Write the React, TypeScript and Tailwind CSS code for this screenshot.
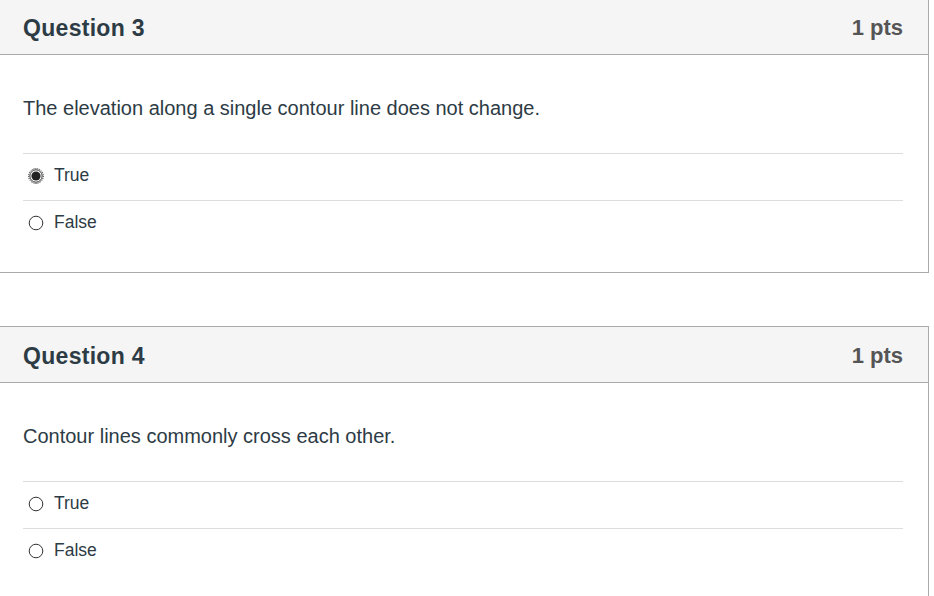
import React from "react";

type Opt = { label: string; checked?: boolean };

function Radio({ checked }: { checked?: boolean }) {
  return (
    <svg width="16" height="16" viewBox="0 0 16 16" className="shrink-0">
      {checked ? (
        <>
          <circle cx="8" cy="8" r="7.4" fill="none" stroke="#222" strokeWidth="1" strokeDasharray="1 1" />
          <circle cx="8" cy="8" r="6.2" fill="#fff" stroke="#333" strokeWidth="1" />
          <circle cx="8" cy="8" r="4.6" fill="#222" />
        </>
      ) : (
        <circle cx="8" cy="8" r="6.8" fill="#fff" stroke="#333" strokeWidth="1" />
      )}
    </svg>
  );
}

function Question({ title, text, options, className }: { title: string; text: string; options: Opt[]; className?: string }) {
  return (
    <div className={"w-[929px] border-t border-r border-b border-[#aaaaaa] bg-white " + (className ?? "")}>
      <div className="h-[56px] bg-[#f5f5f5] border-b border-[#aaaaaa] flex items-center justify-between pl-[23px] pr-[25px] pt-[3px]">
        <span className="text-[23px] font-bold text-[#2d3b45] tracking-[0.3px]">{title}</span>
        <span className="text-[22px] font-bold text-[#555555] pb-[2px]">1 pts</span>
      </div>
      <div className="pl-[23px] pr-[25px] pt-[38px] pb-[25px]">
        <div className="text-[20px] leading-[30px] text-[#2d3b45] mb-[30px]">{text}</div>
        {options.map((o) => (
          <div key={o.label} className="border-t border-[#dddddd] h-[47px] flex items-center pl-[5px] gap-[10px] pb-[2px]">
            <Radio checked={o.checked} />
            <span className="text-[17.5px] text-[#2d3b45] pb-[2px]">{o.label}</span>
          </div>
        ))}
      </div>
    </div>
  );
}

export default function App() {
  return (
    <div className="w-[934px] h-[596px] overflow-hidden bg-white" style={{ fontFamily: '"Liberation Sans", Arial, sans-serif' }}>
      <Question
        className="-mt-[2px]"
        title="Question 3"
        text="The elevation along a single contour line does not change."
        options={[{ label: "True", checked: true }, { label: "False" }]}
      />
      <Question
        className="mt-[53px]"
        title="Question 4"
        text="Contour lines commonly cross each other."
        options={[{ label: "True" }, { label: "False" }]}
      />
    </div>
  );
}
